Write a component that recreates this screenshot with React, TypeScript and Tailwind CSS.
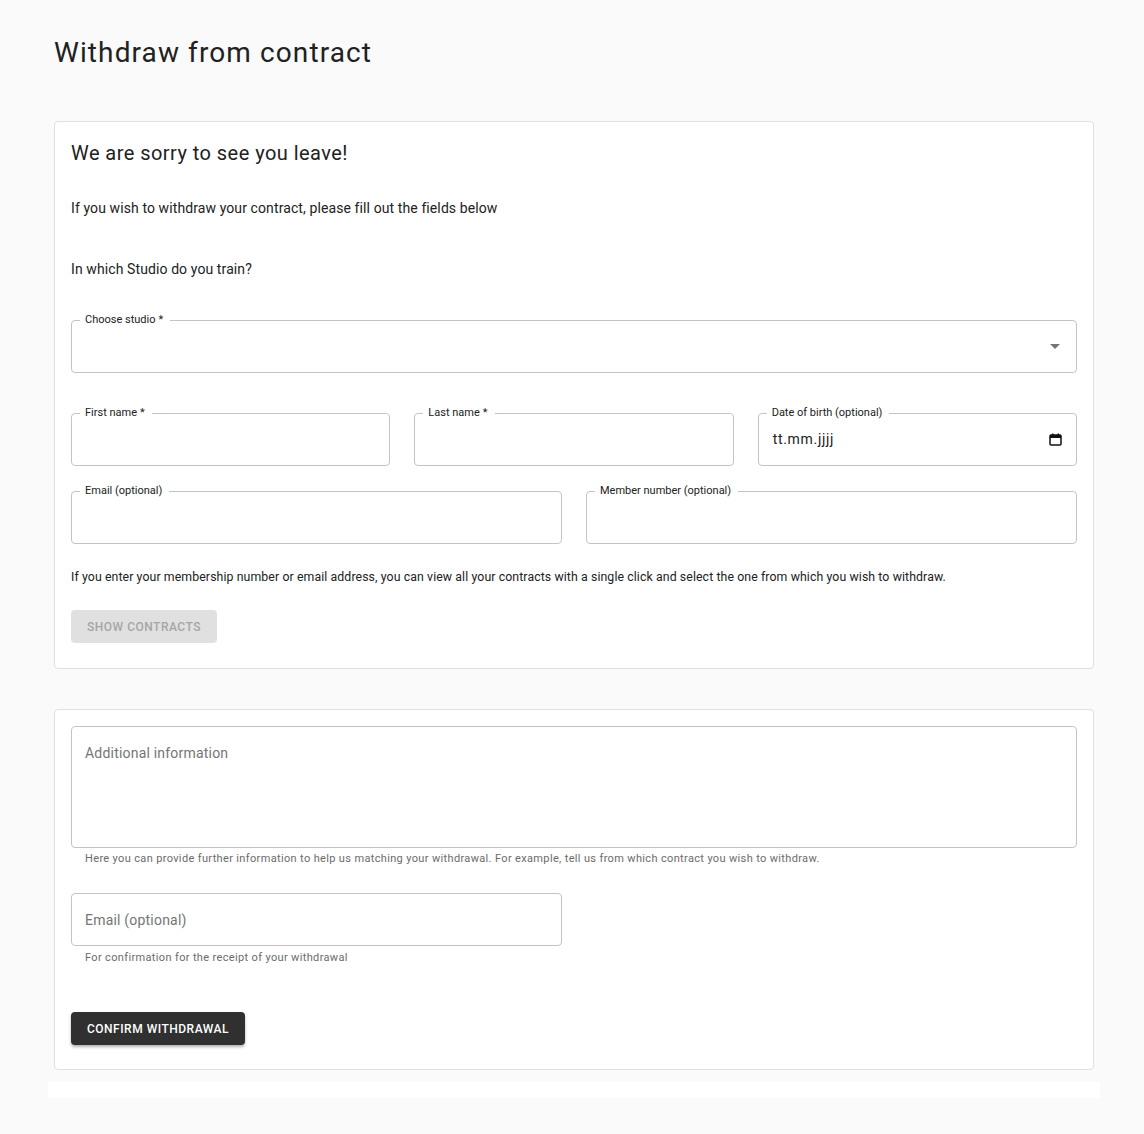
import React from "react";

const FONT = "font-['Roboto',_'Liberation_Sans',_sans-serif]";

function Outlined({
  label,
  required = false,
  className = "",
  children,
}: {
  label: string;
  required?: boolean;
  className?: string;
  children?: React.ReactNode;
}) {
  return (
    <fieldset className={`h-[59px] min-w-0 rounded-[4px] border border-[#c4c4c4] px-[8px] ${className}`}>
      <legend className="pl-[5px] pr-[7px] text-[11px] leading-[12px] text-[#212121]">
        {label}
        {required && <span className="ml-[3px]">*</span>}
      </legend>
      <div className="flex h-[40px] items-center pl-[6px]">{children}</div>
    </fieldset>
  );
}

function Card({ className = "", children }: { className?: string; children: React.ReactNode }) {
  return (
    <section className={`mx-[6px] rounded-[4px] border border-[#e0e0e0] bg-white px-[16px] ${className}`}>
      {children}
    </section>
  );
}

function CalendarIcon() {
  return (
    <svg width="13" height="13" viewBox="0 0 13 13" className="mr-[6px] shrink-0" aria-hidden="true">
      <rect x="1" y="2" width="11" height="10" rx="1" fill="none" stroke="#111" strokeWidth="1.5" />
      <rect x="1" y="2" width="11" height="3" fill="#111" />
      <rect x="3" y="0.5" width="1.5" height="2" fill="#111" />
      <rect x="8.5" y="0.5" width="1.5" height="2" fill="#111" />
    </svg>
  );
}

export default function App() {
  return (
    <div className={`min-h-[1134px] bg-[#fafafa] ${FONT} text-[#212121]`}>
      <div className="ml-[48px] w-[1052px] pt-[35px]">
        <h1 className="ml-[6px] text-[28px] leading-[36px] font-normal tracking-[1.1px]">Withdraw from contract</h1>

        <Card className="mt-[50px] pt-[17px] pb-[25px]">
          <h2 className="text-[20px] leading-[28px] font-normal tracking-[0.45px]">We are sorry to see you leave!</h2>
          <p className="mt-[31px] text-[14px] leading-[20px] tracking-[0.1px]">
            If you wish to withdraw your contract, please fill out the fields below
          </p>
          <p className="mt-[41px] text-[14px] leading-[20px] tracking-[0.1px]">In which Studio do you train?</p>

          <Outlined label="Choose studio" required className="mt-[35px]">
            <div className="flex-1" />
            <svg width="10" height="5" viewBox="0 0 10 5" className="mr-[8px]" aria-hidden="true">
              <path d="M0 0 L10 0 L5 5 Z" fill="#757575" />
            </svg>
          </Outlined>

          <div className="mt-[34px] grid grid-cols-3 gap-[24px]">
            <Outlined label="First name" required />
            <Outlined label="Last name" required />
            <Outlined label="Date of birth (optional)">
              <span className="flex-1 pt-[1px] text-[14px] tracking-[0.7px] text-[#212121]">tt.mm.jjjj</span>
              <CalendarIcon />
            </Outlined>
          </div>

          <div className="mt-[19px] grid grid-cols-2 gap-[24px]">
            <Outlined label="Email (optional)" />
            <Outlined label="Member number (optional)" />
          </div>

          <p className="mt-[24px] text-[12.3px] leading-[18px] tracking-[0.1px]">
            If you enter your membership number or email address, you can view all your contracts with a single click
            and select the one from which you wish to withdraw.
          </p>

          <button
            type="button"
            disabled
            className="mt-[24px] h-[33px] w-[146px] rounded-[4px] bg-[#e0e0e0] text-[12px] font-medium tracking-[0.5px] text-[#a6a6a6] uppercase"
          >
            Show contracts
          </button>
        </Card>

        <Card className="mt-[40px] pt-[16px] pb-[24px]">
          <div className="h-[122px] rounded-[4px] border border-[#c4c4c4] px-[13px] pt-[14px]">
            <span className="text-[14px] leading-[20px] tracking-[0.2px] text-[#757575]">Additional information</span>
          </div>
          <p className="mt-[4px] pl-[14px] text-[11px] leading-[14px] tracking-[0.35px] text-[#6b6b6b]">
            Here you can provide further information to help us matching your withdrawal. For example, tell us from which
            contract you wish to withdraw.
          </p>

          <div className="mt-[27px] flex h-[53px] w-[491px] items-center rounded-[4px] border border-[#c4c4c4] px-[13px]">
            <span className="text-[14px] leading-[20px] tracking-[0.2px] text-[#757575]">Email (optional)</span>
          </div>
          <p className="mt-[5px] pl-[14px] text-[11px] leading-[14px] tracking-[0.35px] text-[#6b6b6b]">
            For confirmation for the receipt of your withdrawal
          </p>

          <button
            type="button"
            className="mt-[47px] h-[33px] w-[174px] rounded-[4px] bg-[#303030] text-[12px] font-medium tracking-[0.5px] text-white uppercase shadow-[0_2px_3px_rgba(0,0,0,0.3)]"
          >
            Confirm withdrawal
          </button>
        </Card>

        <div className="mt-[12px] h-[16px] bg-white" />
      </div>
    </div>
  );
}
